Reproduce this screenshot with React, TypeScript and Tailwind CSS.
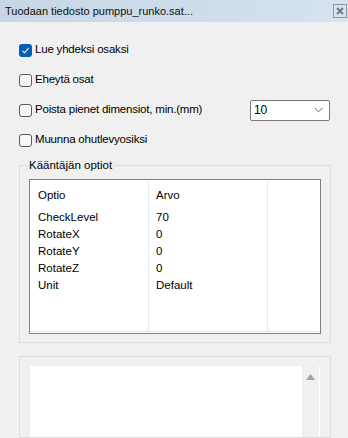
import React from 'react';

const rows = [
  { name: 'CheckLevel', value: '70' },
  { name: 'RotateX', value: '0' },
  { name: 'RotateY', value: '0' },
  { name: 'RotateZ', value: '0' },
  { name: 'Unit', value: 'Default' },
];

const Check: React.FC<{ checked?: boolean; label: string }> = ({ checked, label }) => (
  <label className="flex items-center h-4 gap-[3px]">
    {checked ? (
      <span className="w-[13px] h-[13px] rounded-[3px] bg-[#005fb8] flex items-center justify-center">
        <svg width="9" height="9" viewBox="0 0 9 9">
          <path d="M1.5 4.8 L3.6 6.8 L7.6 2.2" fill="none" stroke="#fff" strokeWidth="1.1" />
        </svg>
      </span>
    ) : (
      <span className="w-[13px] h-[13px] rounded-[3px] border border-[#5a5a5a] bg-[#f7f7f7]" />
    )}
    <span>{label}</span>
  </label>
);

const App: React.FC = () => {
  return (
    <div className="w-[348px] h-[438px] overflow-hidden bg-[#f0f0f0] flex flex-col text-[11.5px] text-black font-['Liberation_Sans',Arial,sans-serif]">
      <div className="h-[22px] shrink-0 flex items-center justify-between pl-[5px] pr-[1px] bg-gradient-to-r from-[#c7d6e6] to-[#d5e2ef]">
        <span className="text-[#101010] text-[11px]">Tuodaan tiedosto pumppu_runko.sat...</span>
        <span className="w-[14px] h-[14px] border border-[#8b95a0] bg-[#dbe4ee] flex items-center justify-center">
          <svg width="8" height="8" viewBox="0 0 8 8">
            <path d="M1 1 L7 7 M7 1 L1 7" stroke="#6f7780" strokeWidth="2" />
          </svg>
        </span>
      </div>

      <div className="pl-[19px] pr-[18px] pt-[20px] flex flex-col gap-[14px] tracking-[-0.2px]">
        <Check checked label="Lue yhdeksi osaksi" />
        <Check label="Eheytä osat" />
        <div className="flex items-center justify-between h-4">
          <Check label="Poista pienet dimensiot, min.(mm)" />
          <div className="w-[80px] h-[21px] shrink-0 bg-white border border-[#7a7a7a] rounded-[2px] flex items-center justify-between pl-[3px] pr-[6px] text-[12px]">
            <span>10</span>
            <svg width="9" height="6" viewBox="0 0 9 6">
              <path d="M0.5 0.8 L4.5 4.8 L8.5 0.8" fill="none" stroke="#6a6a6a" strokeWidth="1" />
            </svg>
          </div>
        </div>
        <Check label="Muunna ohutlevyosiksi" />
      </div>

      <div className="ml-[19px] mr-[17px] mt-[17px] h-[178px] shrink-0 relative border border-[#dcdcdc] px-[9px] pt-[13px] pb-[8px]">
        <span className="absolute left-[8px] top-[-8px] bg-[#f0f0f0] px-[1px] leading-[14px]">Kääntäjän optiot</span>
        <div className="h-full border border-[#7c8088] bg-white p-[1px]">
          <div className="h-full grid grid-cols-[118px_119px_1fr] border-b border-[#e3e3e3]">
            <div className="border-r border-[#e3ebf5] pl-[7px] pt-[6px]">
              <div className="h-[22px]">Optio</div>
              {rows.map((r) => (
                <div key={r.name} className="h-[17px] leading-[17px]">{r.name}</div>
              ))}
            </div>
            <div className="border-r border-[#e3ebf5] pl-[7px] pt-[6px]">
              <div className="h-[22px]">Arvo</div>
              {rows.map((r) => (
                <div key={r.name} className="h-[17px] leading-[17px]">{r.value}</div>
              ))}
            </div>
            <div />
          </div>
        </div>
      </div>

      <div className="ml-[19px] mr-[17px] mt-[13px] flex-1 border border-[#dcdcdc] pl-[10px] pr-[10px] pt-[9px]">
        <div className="h-full bg-white flex justify-end">
          <div className="w-[17px] mr-[1px] bg-[#f0f0f0] flex justify-center pt-[8px]">
            <svg width="9" height="6" viewBox="0 0 9 6">
              <path d="M4.5 0 L9 6 L0 6 Z" fill="#a3a3a3" />
            </svg>
          </div>
        </div>
      </div>
    </div>
  );
};

export default App;
